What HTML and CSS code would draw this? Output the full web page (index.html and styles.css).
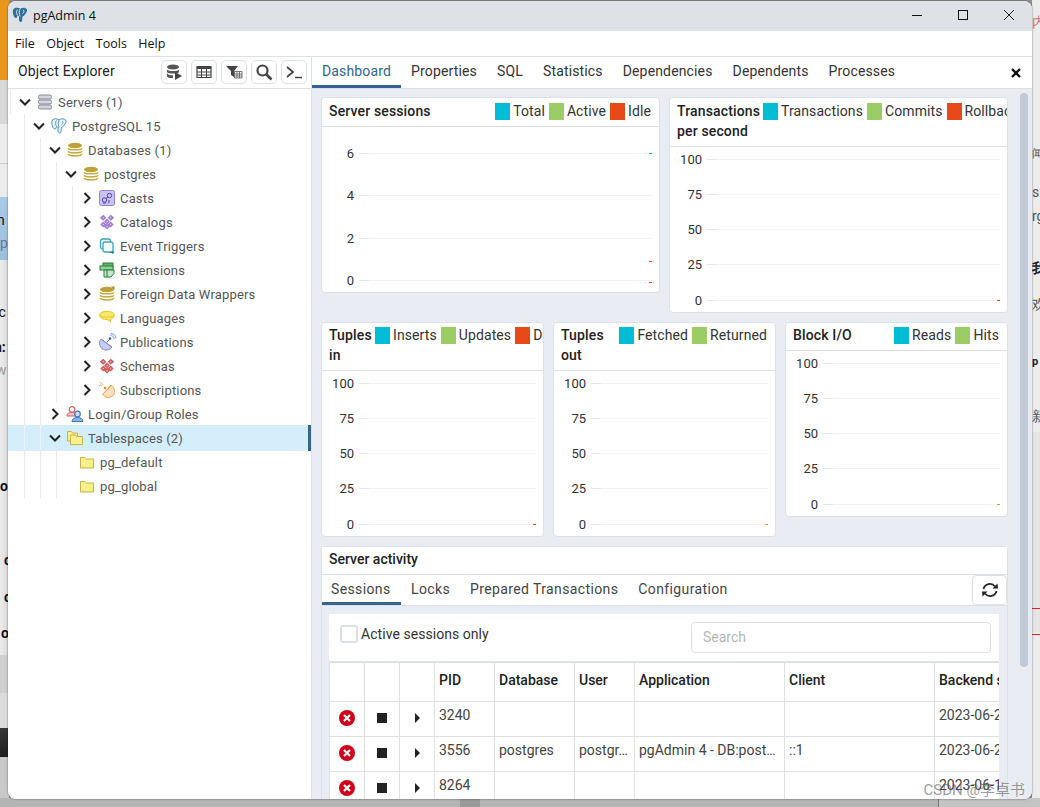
FILE: index.html
```html
<!DOCTYPE html>
<html lang="en">
<head>
<meta charset="utf-8">
<title>pgAdmin 4</title>
<link rel="stylesheet" href="styles.css">
</head>
<body>
<svg width="0" height="0" class="defs">
  <symbol id="elephant" viewBox="0 0 16 16">
    <path d="M3 1C1 1.500.5 4 1 6.500 1.500 9 2.500 11 4 11c1 0 1.200-1.500 1.500-2.500.5.500 1.300.7 1.500.5v4c0 1.800 1.800 2.500 2.800 1.500.7-1 .2-3.500.7-5 1.500-.5 2.500-2 3.500-3.500C15.500 4 15.500 1.800 13.500 1.200 11.500.5 9.500 1 8.200 1.800 7 1 4.800.5 3 1z" fill="#336f9c"/>
    <path d="M5.500 2.500C4 4 4.500 7 5.500 8.500M8.200 1.800C7 3.500 7 7 8 9.500M11 3c1.500.5 1 3-.5 3.500" fill="none" stroke="#dbeaf4" stroke-width=".9"/>
  </symbol>
  <symbol id="elephant-line" viewBox="0 0 16 16">
    <path d="M3 1C1 1.500.5 4 1 6.500 1.500 9 2.500 11 4 11c1 0 1.200-1.500 1.500-2.500.5.500 1.300.7 1.500.5v4c0 1.800 1.800 2.500 2.800 1.500.7-1 .2-3.500.7-5 1.500-.5 2.500-2 3.500-3.500C15.500 4 15.500 1.800 13.500 1.200 11.500.5 9.500 1 8.200 1.800 7 1 4.800.5 3 1z" fill="#e6f3fb" stroke="#4f94c2"/>
    <path d="M5.500 2.500C4 4 4.500 7 5.500 8.500M8.200 1.800C7 3.500 7 7 8 9.500M11 3c1.500.5 1 3-.5 3.500" fill="none" stroke="#4f94c2" stroke-width=".9"/>
  </symbol>
  <symbol id="db" viewBox="0 0 16 16">
    <ellipse cx="8" cy="3.500" rx="7" ry="2.800" fill="#bda23a"/>
    <path d="M1 6.300c1 2 13 2 14 0M1 9.300c1 2 13 2 14 0M1 12c1 2.500 13 2.500 14 0" fill="none" stroke="#c6ab42" stroke-width="1.500"/>
  </symbol>
  <symbol id="folder" viewBox="0 0 16 16">
    <path d="M1.500 3.500h4.500l1.500 1.500h7v9h-13z" fill="#f8ef8f" stroke="#c9b24a"/>
  </symbol>
  <symbol id="cluster" viewBox="0 0 16 16">
    <path fill="currentColor" d="M4.300 .8l3 3-3 3-3.500-3zM11.700 .8l3.500 3-3.500 3-3-3zM8 4.500l3 3-3 3-3-3zM4.300 7.500l3 3-3 3-3-3zM11.700 7.500l3 3-3 3-3-3zM8 9.500l3 3-3 3-3-3z"/>
    <path fill="#fff" opacity=".55" d="M4.300 2.800l1 1-1 1-1-1zM11.700 2.800l1 1-1 1-1-1zM8 6.500l1 1-1 1-1-1zM4.300 9.500l1 1-1 1-1-1zM11.700 9.500l1 1-1 1-1-1zM8 11.500l1 1-1 1-1-1z"/>
  </symbol>
  <symbol id="down" viewBox="0 0 16 16"><path d="M3 5.500l5 5 5-5" fill="none" stroke="#222" stroke-width="2"/></symbol>
  <symbol id="right" viewBox="0 0 16 16"><path d="M5.500 3l5 5-5 5" fill="none" stroke="#222" stroke-width="2"/></symbol>
  <symbol id="cancel" viewBox="0 0 16 16"><circle cx="8" cy="8" r="8" fill="#d0021b"/><path d="M5 5l6 6M11 5l-6 6" stroke="#fff" stroke-width="2.200"/></symbol>
</svg>

<div class="desktop-left">
  <div class="strip strip-orange"></div>
  <div class="strip strip-grey"></div>
  <div class="strip strip-light"></div>
  <div class="strip strip-white"></div>
  <div class="strip strip-blue"><span>n</span><span class="dim">p</span></div>
  <div class="strip strip-pale">
    <span class="t1">lc</span><span class="t2">n:</span><span class="t3">w</span><span class="t4">o</span>
    <span class="t5">c</span><span class="t6">c</span><span class="t7">o</span>
  </div>
  <div class="strip strip-mid"></div>
  <div class="strip strip-pale2"></div>
  <div class="strip strip-dark"></div>
  <div class="strip strip-end"></div>
</div>

<div class="desktop-right">
  <span class="rt r1">内</span><span class="rt r2">闻</span><span class="rt r3">s:</span><span class="rt r4">rg</span>
  <span class="rt r5">我</span><span class="rt r6">欢</span><span class="rt r7">新</span><span class="rt r8">p</span>
  <span class="r-band"></span><span class="r-red r-red-a"></span><span class="r-red r-red-b"></span>
</div>

<div class="desktop-bottom"></div>

<main class="window">
  <header class="titlebar">
    <svg class="app-logo"><use href="#elephant"/></svg>
    <span class="app-title">pgAdmin 4</span>
    <div class="win-controls">
      <svg class="wc" viewBox="0 0 46 30"><path d="M18 14.500h10" stroke="#111" fill="none"/></svg>
      <svg class="wc" viewBox="0 0 46 30"><rect x="18.500" y="9.500" width="9" height="9" stroke="#111" fill="none"/></svg>
      <svg class="wc" viewBox="0 0 46 30"><path d="M18 9l10 10M28 9L18 19" stroke="#222" fill="none"/></svg>
    </div>
  </header>

  <nav class="menubar">
    <span>File</span><span>Object</span><span>Tools</span><span>Help</span>
  </nav>

  <div class="workspace">
    <aside class="explorer">
      <div class="explorer-head">
        <span class="explorer-title">Object Explorer</span>
        <div class="toolbar">
          <button class="tool" aria-label="Query tool"><svg viewBox="0 0 18 18"><ellipse cx="8" cy="4" rx="6" ry="2.500" fill="#555"/><path d="M2 6.500c1 2 11 2 12 0v2.500c-1 2-11 2-12 0zM2 10.500c1 1.500 5 2 6 1.800V15c-2 .3-6-.2-6-1.800z" fill="#555"/><path d="M10 9l7 4-7 4z" fill="#444"/></svg></button>
          <button class="tool" aria-label="View data"><svg viewBox="0 0 18 18"><path d="M2 3.500h14v11H2z" fill="none" stroke="#444" stroke-width="1.200"/><path d="M2 3h14v3H2z" fill="#444"/><path d="M2 9h14M2 12h14M6.500 6v8M11.500 6v8" stroke="#444"/></svg></button>
          <button class="tool" aria-label="Filter"><svg viewBox="0 0 18 18"><path d="M1 3h12L9 8v6L6 12V8z" fill="#444"/><path d="M9.500 8.500h7.500v6.500H9.500zM9.500 11h7.500M9.500 13h7.500M12 8.500V15M14.500 8.500V15" fill="#fff" stroke="#555" stroke-width=".8"/></svg></button>
          <button class="tool" aria-label="Search"><svg viewBox="0 0 18 18"><circle cx="7.500" cy="7.500" r="5" fill="none" stroke="#444" stroke-width="2.200"/><path d="M11 11l5.500 5.500" stroke="#444" stroke-width="2.600"/></svg></button>
          <button class="tool" aria-label="PSQL"><svg viewBox="0 0 18 18"><path d="M2 4l6 5-6 5" fill="none" stroke="#444" stroke-width="1.800"/><path d="M10 14.500h7" stroke="#444" stroke-width="1.500"/></svg></button>
        </div>
      </div>
      <div class="tree">
        <div class="row row-root"><span class="g g-tail"></span><svg class="chev"><use href="#down"/></svg>
          <svg class="ico" viewBox="0 0 16 16"><g fill="#d3d4dc" stroke="#8a8b9c" stroke-width="1"><rect x="1.500" y="1" width="13" height="4" rx="1.500"/><rect x="1.500" y="6" width="13" height="4" rx="1.500"/><rect x="1.500" y="11" width="13" height="4" rx="1.500"/></g></svg>
          <span class="lbl">Servers (1)</span></div>

        <div class="row"><span class="g g-tail"></span><svg class="chev"><use href="#down"/></svg>
          <svg class="ico"><use href="#elephant-line"/></svg><span class="lbl">PostgreSQL 15</span></div>

        <div class="row"><span class="g"></span><span class="g g-tail"></span><svg class="chev"><use href="#down"/></svg>
          <svg class="ico"><use href="#db"/></svg><span class="lbl">Databases (1)</span></div>

        <div class="row"><span class="g"></span><span class="g"></span><span class="g g-tail"></span><svg class="chev"><use href="#down"/></svg>
          <svg class="ico"><use href="#db"/></svg><span class="lbl">postgres</span></div>

        <div class="row"><span class="g"></span><span class="g"></span><span class="g"></span><span class="g g-tail"></span><svg class="chev"><use href="#right"/></svg>
          <svg class="ico" viewBox="0 0 16 16"><rect x=".5" y=".5" width="15" height="15" rx="2" fill="#c9c2f2" stroke="#8f84d8"/><circle cx="5.500" cy="10" r="2.200" fill="none" stroke="#4f43b5"/><circle cx="10.500" cy="5.500" r="2.200" fill="none" stroke="#4f43b5"/><path d="M7 8.500l2-1.500M10 10v3M4 13h3" stroke="#4f43b5"/></svg>
          <span class="lbl">Casts</span></div>

        <div class="row"><span class="g"></span><span class="g"></span><span class="g"></span><span class="g g-tail"></span><svg class="chev"><use href="#right"/></svg>
          <svg class="ico ico-purple"><use href="#cluster"/></svg>
          <span class="lbl">Catalogs</span></div>

        <div class="row"><span class="g"></span><span class="g"></span><span class="g"></span><span class="g g-tail"></span><svg class="chev"><use href="#right"/></svg>
          <svg class="ico" viewBox="0 0 16 16"><rect x="1.500" y="1" width="10" height="10" rx="2" fill="#e4f5f7" stroke="#3fa7b5" stroke-width="1.300"/><rect x="4" y="4" width="10" height="10" rx="2" fill="#f4fbfc" stroke="#3fa7b5" stroke-width="1.300"/><path d="M11 14.500h4l-1.500-1.500M15 14.500l-1.500 1" stroke="#23798a" fill="none"/></svg>
          <span class="lbl">Event Triggers</span></div>

        <div class="row"><span class="g"></span><span class="g"></span><span class="g"></span><span class="g g-tail"></span><svg class="chev"><use href="#right"/></svg>
          <svg class="ico" viewBox="0 0 16 16"><rect x="4" y="1" width="10" height="5" fill="#5cb36a" stroke="#2a7a3c"/><rect x="1" y="4" width="13" height="4" fill="#8ed19a" stroke="#2a7a3c"/><path d="M5 8h10v3.500L12 15H5z" fill="#bfe6c5" stroke="#2a7a3c"/><path d="M8 8v7" stroke="#2a7a3c"/></svg>
          <span class="lbl">Extensions</span></div>

        <div class="row"><span class="g"></span><span class="g"></span><span class="g"></span><span class="g g-tail"></span><svg class="chev"><use href="#right"/></svg>
          <svg class="ico" viewBox="0 0 16 16"><use href="#db"/><path d="M12 .500h3.500V4z" fill="#a08a35"/></svg>
          <span class="lbl">Foreign Data Wrappers</span></div>

        <div class="row"><span class="g"></span><span class="g"></span><span class="g"></span><span class="g g-tail"></span><svg class="chev"><use href="#right"/></svg>
          <svg class="ico" viewBox="0 0 16 16"><path d="M.7 5c0-2.500 3-3.500 7.300-3.500s7.300 1 7.300 3.500-2 4-3.800 4v3L8.500 9.500C4 9.500.7 8 .7 5z" fill="#fbe96a" stroke="#e2c72a"/><path d="M1.500 6c2 1.500 10 1.500 13 0" stroke="#e2c72a" fill="none"/></svg>
          <span class="lbl">Languages</span></div>

        <div class="row"><span class="g"></span><span class="g"></span><span class="g"></span><span class="g g-tail"></span><svg class="chev"><use href="#right"/></svg>
          <svg class="ico ico-wide" viewBox="0 0 18 18"><path d="M3 6c-3 4-1 10 4 11 3 .5 6-1 7-3z" fill="#c5cdf0" stroke="#7d8bd0"/><path d="M3.500 6.500l10 7.500" stroke="#7d8bd0"/><path d="M9 9l3-3" stroke="#4a63c8"/><circle cx="12" cy="5.500" r="1.200" fill="#2f4fc0"/><path d="M12 2c2 0 4 1.500 4 4M13 .500c3 0 5 2.500 5 5" stroke="#5a74d0" fill="none" stroke-width=".8"/></svg>
          <span class="lbl">Publications</span></div>

        <div class="row"><span class="g"></span><span class="g"></span><span class="g"></span><span class="g g-tail"></span><svg class="chev"><use href="#right"/></svg>
          <svg class="ico ico-red"><use href="#cluster"/></svg>
          <span class="lbl">Schemas</span></div>

        <div class="row"><span class="g"></span><span class="g"></span><span class="g"></span><span class="g g-tail"></span><svg class="chev"><use href="#right"/></svg>
          <svg class="ico ico-wide" viewBox="0 0 18 18"><path d="M13 4c4 3 5 9 1 11.500-3 2-7 1-9.500-2z" fill="#fbe0bd" stroke="#eaa55a"/><path d="M4.500 13.500L13 5" stroke="#eaa55a"/><circle cx="7" cy="7" r="1.300" fill="#e88a2c"/><path d="M1 5c1-1 2-1 3 0M2 1.500c1 0 2.500 1 3 3" stroke="#e8a860" fill="none"/></svg>
          <span class="lbl">Subscriptions</span></div>

        <div class="row"><span class="g"></span><span class="g g-tail"></span><svg class="chev"><use href="#right"/></svg>
          <svg class="ico ico-wide" viewBox="0 0 18 18"><circle cx="6" cy="4.500" r="2.800" fill="#fff" stroke="#d2606a" stroke-width="1.200"/><path d="M1 11c0-3 2-3.500 5-3.500S11 8 11 11z" fill="#f3c5c8" stroke="#d2606a"/><circle cx="11.500" cy="9" r="2.800" fill="#cfe0f5" stroke="#3a78c0" stroke-width="1.200"/><path d="M6 16.500c0-3 2.500-4 5.500-4s5.500 1 5.500 4z" fill="#8db5e4" stroke="#3a78c0"/></svg>
          <span class="lbl">Login/Group Roles</span></div>

        <div class="row row-selected"><span class="g"></span><span class="g g-tail"></span><svg class="chev"><use href="#down"/></svg>
          <svg class="ico" viewBox="0 0 16 16"><path d="M.500 1.500h4l1 1.500h5v8H.500z" fill="#f8ef8f" stroke="#c9b24a"/><path d="M3.500 5h5l1 1.500h6v8h-12z" fill="#f8ef8f" stroke="#c9b24a"/></svg>
          <span class="lbl">Tablespaces (2)</span></div>

        <div class="row row-leaf"><span class="g"></span><span class="g"></span><span class="g g-leaf"></span><svg class="ico"><use href="#folder"/></svg><span class="lbl">pg_default</span></div>
        <div class="row row-leaf"><span class="g"></span><span class="g"></span><span class="g g-leaf"></span><svg class="ico"><use href="#folder"/></svg><span class="lbl">pg_global</span></div>
      </div>
    </aside>

    <section class="content">
      <div class="tabbar">
        <div class="tabs">
          <span class="tab tab-active">Dashboard</span>
          <span class="tab">Properties</span>
          <span class="tab">SQL</span>
          <span class="tab">Statistics</span>
          <span class="tab">Dependencies</span>
          <span class="tab">Dependents</span>
          <span class="tab">Processes</span>
        </div>
        <svg class="tab-close" viewBox="0 0 10 10" aria-label="Close"><path d="M1 1l8 8M9 1L1 9" stroke="#111" stroke-width="2.400"/></svg>
      </div>

      <div class="dash">
        <div class="dash-main">
          <div class="chart-row">
            <article class="card">
              <div class="card-head">
                <b class="card-title card-title-wide">Server sessions</b>
                <div class="legend"><i class="sw cyan"></i><span>Total</span><i class="sw green"></i><span>Active</span><i class="sw red"></i><span>Idle</span></div>
              </div>
              <div class="plot plot-tall">
                <div class="tick"><span>6</span><em><u class="dot cyan"></u></em></div>
                <div class="tick"><span>4</span><em></em></div>
                <div class="tick"><span>2</span><em><u class="dot red low"></u></em></div>
                <div class="tick"><span>0</span><em><u class="dot red under"></u></em></div>
              </div>
            </article>
            <article class="card">
              <div class="card-head card-head-two">
                <b class="card-title">Transactions per second</b>
                <div class="legend legend-start"><i class="sw cyan"></i><span>Transactions</span><i class="sw green"></i><span>Commits</span><i class="sw red"></i><span>Rollbacks</span></div>
              </div>
              <div class="plot">
                <div class="tick"><span>100</span><em></em></div>
                <div class="tick"><span>75</span><em></em></div>
                <div class="tick"><span>50</span><em></em></div>
                <div class="tick"><span>25</span><em></em></div>
                <div class="tick"><span>0</span><em><u class="dot red"></u></em></div>
              </div>
            </article>
          </div>

          <div class="chart-row chart-row-b">
            <article class="card">
              <div class="card-head card-head-tuples">
                <b class="card-title card-title-narrow">Tuples in</b>
                <div class="legend"><i class="sw cyan"></i><span>Inserts</span><i class="sw green"></i><span>Updates</span><i class="sw red"></i><span>Deletes</span></div>
              </div>
              <div class="plot">
                <div class="tick"><span>100</span><em></em></div>
                <div class="tick"><span>75</span><em></em></div>
                <div class="tick"><span>50</span><em></em></div>
                <div class="tick"><span>25</span><em></em></div>
                <div class="tick"><span>0</span><em><u class="dot red"></u></em></div>
              </div>
            </article>
            <article class="card">
              <div class="card-head card-head-tuples">
                <b class="card-title card-title-narrow">Tuples out</b>
                <div class="legend"><i class="sw cyan"></i><span>Fetched</span><i class="sw green"></i><span>Returned</span></div>
              </div>
              <div class="plot">
                <div class="tick"><span>100</span><em></em></div>
                <div class="tick"><span>75</span><em></em></div>
                <div class="tick"><span>50</span><em></em></div>
                <div class="tick"><span>25</span><em></em></div>
                <div class="tick"><span>0</span><em><u class="dot amber"></u></em></div>
              </div>
            </article>
            <article class="card">
              <div class="card-head card-head-block">
                <b class="card-title card-title-wide">Block I/O</b>
                <div class="legend"><i class="sw cyan"></i><span>Reads</span><i class="sw green"></i><span>Hits</span></div>
              </div>
              <div class="plot">
                <div class="tick"><span>100</span><em></em></div>
                <div class="tick"><span>75</span><em></em></div>
                <div class="tick"><span>50</span><em></em></div>
                <div class="tick"><span>25</span><em></em></div>
                <div class="tick"><span>0</span><em><u class="dot amber"></u></em></div>
              </div>
            </article>
          </div>

          <article class="activity">
            <div class="activity-title">Server activity</div>
            <div class="subtabs">
              <span class="subtab subtab-active">Sessions</span>
              <span class="subtab">Locks</span>
              <span class="subtab">Prepared Transactions</span>
              <span class="subtab">Configuration</span>
              <button class="refresh" aria-label="Refresh"><svg viewBox="0 0 18 18"><path d="M2.500 8a6.500 6.500 0 0 1 11.500-2.500M15.500 10A6.500 6.500 0 0 1 4 12.500" fill="none" stroke="#222" stroke-width="1.700"/><path d="M11.500 7.500H17l-.5-5zM6.500 10.500H1l.5 5z" fill="#222"/></svg></button>
            </div>
            <div class="activity-body">
              <div class="filters">
                <label class="check"><span class="box"></span>Active sessions only</label>
                <span class="search">Search</span>
              </div>
              <div class="grid">
                <div class="gh"></div><div class="gh"></div><div class="gh"></div>
                <div class="gh">PID</div><div class="gh">Database</div><div class="gh">User</div><div class="gh">Application</div><div class="gh">Client</div><div class="gh">Backend s</div>

                <div class="gc gi"><svg class="x"><use href="#cancel"/></svg></div><div class="gc gi"><span class="stop"></span></div><div class="gc gi"><span class="play"></span></div>
                <div class="gc">3240</div><div class="gc"></div><div class="gc"></div><div class="gc"></div><div class="gc"></div><div class="gc">2023-06-2</div>

                <div class="gc gi"><svg class="x"><use href="#cancel"/></svg></div><div class="gc gi"><span class="stop"></span></div><div class="gc gi"><span class="play"></span></div>
                <div class="gc">3556</div><div class="gc">postgres</div><div class="gc">postgr…</div><div class="gc">pgAdmin 4 - DB:post…</div><div class="gc">::1</div><div class="gc">2023-06-2</div>

                <div class="gc gi"><svg class="x"><use href="#cancel"/></svg></div><div class="gc gi"><span class="stop"></span></div><div class="gc gi"><span class="play"></span></div>
                <div class="gc">8264</div><div class="gc"></div><div class="gc"></div><div class="gc"></div><div class="gc"></div><div class="gc">2023-06-1</div>
              </div>
            </div>
          </article>
        </div>
        <div class="scrollbar"><div class="thumb"></div></div>
      </div>
    </section>
  </div>
</main>

<span class="watermark">CSDN @李卓书</span>
</body>
</html>
```
FILE: styles.css
```css
* { box-sizing: border-box; }
html, body { margin: 0; height: 100%; }
body {
  position: relative;
  width: 1040px;
  height: 807px;
  overflow: hidden;
  background: #8f8f8f;
  font-family: Roboto, "Noto Sans", sans-serif;
  font-size: 14px;
  color: #222;
}
.defs { position: absolute; }

/* desktop behind the window */
.desktop-left {
  position: absolute;
  left: 0; top: 0;
  width: 9px; height: 807px;
  display: flex;
  flex-direction: column;
  overflow: hidden;
  font-size: 14px;
  color: #111;
}
.strip { flex: none; position: relative; }
.strip-orange { height: 80px; background: #e8961c; }
.strip-grey { height: 44px; background: #d8d8d8; }
.strip-light { height: 40px; background: #ededed; border-bottom: 1px solid #ccc; }
.strip-white { height: 33px; background: #ececec; }
.strip-blue { height: 63px; background: linear-gradient(#a8cbe6, #9cc0de); }
.strip-blue span { position: absolute; left: -3px; top: 15px; }
.strip-blue .dim { left: 0; top: 38px; color: #5e7d96; }
.strip-pale { height: 395px; background: linear-gradient(to right, #ececec, #d8d8d8); }
.strip-pale span { position: absolute; }
.t1 { left: -5px; top: 44px; }
.t2 { left: -6px; top: 79px; font-weight: 700; }
.t3 { left: -4px; top: 102px; color: #999; }
.t4 { left: 0; top: 218px; font-weight: 700; }
.t5 { left: 4px; top: 292px; font-weight: 700; }
.t6 { left: 4px; top: 329px; font-weight: 700; }
.t7 { left: 1px; top: 365px; font-weight: 700; }
.strip-mid { height: 38px; background: #cfcfcf; }
.strip-pale2 { height: 35px; background: #dcdcdc; }
.strip-dark { height: 29px; background: linear-gradient(#383838, #1e1e1e); }
.strip-end { height: 90px; background: #c8c8c8; }

.desktop-right {
  position: absolute;
  right: 0; top: 0;
  width: 8px; height: 807px;
  background: #ececec;
  overflow: hidden;
}
.rt { position: absolute; left: 0; font-size: 14px; color: #555; }
.r1 { top: 14px; color: #c77; }
.r2 { top: 146px; font-size: 11px; }
.r3 { top: 184px; }
.r4 { top: 208px; }
.r5 { top: 260px; font-weight: 700; color: #222; }
.r6 { top: 296px; }
.r7 { top: 408px; }
.r8 { top: 355px; color: #222; font-weight: 700; font-size: 11px; }
.r-band { position: absolute; left: 0; top: 432px; width: 8px; height: 200px; background: #e4e4e4; }
.r-red { position: absolute; left: 0; width: 8px; height: 1px; background: #e02020; }
.r-red-a { top: 608px; }
.r-red-b { top: 634px; }
.desktop-bottom {
  position: absolute;
  left: 0; bottom: 0;
  width: 1040px; height: 9px;
  background: linear-gradient(to right, #b4b4b4 460px, #999 460px, #999 480px, #b4b4b4 480px, #b4b4b4 938px, #777 938px, #777 939px, #c4c4c4 939px);
}

/* window */
.window {
  position: absolute;
  left: 8px; top: 1px;
  width: 1024px; height: 798px;
  border-radius: 8px;
  overflow: hidden;
  display: flex;
  flex-direction: column;
  background: #fff;
  box-shadow: 0 0 2px rgba(0, 0, 0, .6);
}
.titlebar {
  flex: none;
  height: 30px;
  background: #dee1e6;
  display: flex;
  align-items: center;
  padding-left: 4px;
}
.app-logo { width: 16px; height: 16px; margin-right: 5px; margin-top: -2px; }
.app-title { font-family: "Open Sans", sans-serif; font-size: 12.5px; color: #111; margin-top: -2px; }
.win-controls { margin-left: auto; display: flex; }
.wc { width: 46px; height: 30px; }
.menubar {
  flex: none;
  height: 26px;
  background: #fff;
  display: flex;
  align-items: center;
  gap: 11.5px;
  padding-left: 7px;
  font-family: "Open Sans", sans-serif;
  font-size: 12.5px;
  color: #111;
  border-bottom: 1px solid #dde0e6;
}
.workspace { flex: 1; min-height: 0; display: flex; }

/* explorer */
.explorer {
  flex: none;
  width: 304px;
  background: #fff;
  border-right: 1px solid #dde0e6;
  display: flex;
  flex-direction: column;
}
.explorer-head {
  flex: none;
  height: 32px;
  display: flex;
  align-items: center;
  padding-left: 10px;
  border-bottom: 1px solid #dde0e6;
}
.explorer-title { color: #222; letter-spacing: .15px; margin-top: -3px; }
.toolbar { margin-left: auto; display: flex; gap: 4px; margin-right: 4px; margin-top: -2px; }
.tool {
  width: 26px; height: 24px;
  padding: 0;
  background: #fff;
  border: 1px solid #dde0e6;
  border-radius: 5px;
  display: flex;
  align-items: center;
  justify-content: center;
}
.tool svg { width: 18px; height: 18px; }
.refresh svg { width: 18px; height: 18px; }

.tree { flex: 1; padding: 1px 0 0 16px; color: #555; font-size: 13px; letter-spacing: .17px; }
.row {
  position: relative;
  height: 24px;
  display: flex;
  align-items: center;
}
.g {
  flex: none;
  width: 16px;
  align-self: stretch;
  border-left: 1px solid #e8eaee;
}
.g-tail { width: 7px; }
.g-leaf { width: 23px; }
.row-root { margin-left: -14px; }
.chev { flex: none; width: 16px; height: 16px; margin-right: 4px; }
.ico { flex: none; width: 16px; height: 16px; margin-right: 5px; overflow: visible; }
.ico-wide { width: 18px; height: 18px; margin-left: -1px; margin-right: 4px; }
.ico-purple { color: #a07ad8; }
.ico-red { color: #cf5a5a; }
.lbl { white-space: nowrap; }
.row-selected {
  height: 26px;
  margin: -1px 0 -1px -16px;
  padding-left: 16px;
  background: #d4edfb;
  border-right: 3px solid #326690;
}
.row-selected .g { border-left-color: #f0f4f8; }

/* content */
.content { flex: 1; min-width: 0; display: flex; flex-direction: column; background: #e9ecf2; }
.tabbar {
  flex: none;
  height: 32px;
  background: #fff;
  border-bottom: 1px solid #dde0e6;
  display: flex;
  align-items: flex-start;
  justify-content: space-between;
}
.tabs { display: flex; }
.tab {
  padding: 0 10px;
  height: 31px;
  line-height: 28px;
  color: #333;
  letter-spacing: .15px;
  border-bottom: 3px solid transparent;
}
.tab-active { color: #326690; border-bottom-color: #326690; }
.tab-close { flex: none; width: 10px; height: 10px; margin: 11px 11px 0 0; }

.dash { flex: 1; min-height: 0; display: flex; overflow: hidden; }
.dash-main {
  flex: none;
  width: 687px;
  margin-left: 9px;
  padding-top: 8px;
  display: flex;
  flex-direction: column;
  gap: 9px;
  min-height: 0;
}
.chart-row { display: flex; gap: 9px; align-items: flex-start; flex: none; }
.card {
  flex: 1 1 0;
  min-width: 0;
  background: #fff;
  border: 1px solid #dde0e6;
  border-radius: 4px;
  overflow: hidden;
}
.card-head {
  display: flex;
  align-items: flex-start;
  padding: 3px 8px 0 7px;
  height: 29px;
  line-height: 20px;
  border-bottom: 1px solid #dde0e6;
  overflow: hidden;
}
.card-head-two { height: 49px; }
.card-head-tuples { height: 48px; padding-top: 2px; }
.card-head-block { height: 28px; padding-top: 2px; }
.card-title { flex: none; width: 86px; font-weight: 500; color: #222; line-height: 20px; letter-spacing: .15px; }
.card-title-narrow { width: 46px; }
.card-title-wide { width: auto; }
.legend { display: flex; margin-left: auto; color: #333; flex: none; align-items: flex-start; letter-spacing: .1px; }
.legend-start { margin-left: 0; }
.sw { flex: none; display: block; width: 15px; height: 17px; margin: 2px 3px 0 4px; }
.sw:first-child { margin-left: 0; }
.cyan { background: #00bcd4; }
.green { background: #9ccc65; }
.red { background: #e64a19; }
.amber { background: #d0a020; }

.plot { padding: 4px 7px 4px 0; display: flex; flex-direction: column; }
.plot-tall { padding: 18px 7px 3.5px 0; }
.tick {
  display: flex;
  align-items: center;
  height: 16px;
  font-size: 13px;
  color: #333;
}
.tick + .tick { margin-top: 19.25px; }
.plot-tall .tick + .tick { margin-top: 26.5px; }
.tick span { flex: none; width: 32px; text-align: right; margin-right: 5px; }
.tick em {
  position: relative;
  flex: 1;
  height: 1px;
  background: linear-gradient(to right, #e6e6e6 10px, #f2f3f5 10px);
}
.dot { position: absolute; right: 0; top: 0; width: 3px; height: 1px; }
.dot.low { top: 23px; }
.dot.under { top: 2px; }

/* activity */
.activity {
  flex: none;
  background: #e9ecf2;
  border: 1px solid #dde0e6;
  border-radius: 4px 4px 0 0;
}
.activity-title {
  height: 28px;
  background: #fff;
  padding: 2px 7px 0;
  font-weight: 500;
  line-height: 20px;
  color: #222;
  border-bottom: 1px solid #dde0e6;
}
.subtabs {
  position: relative;
  height: 31px;
  display: flex;
  background: #fff;
  border-bottom: 1px solid #dde0e6;
}
.subtab {
  padding: 0 10px;
  height: 30px;
  line-height: 28px;
  color: #444;
  letter-spacing: .38px;
  border-bottom: 3px solid transparent;
}
.subtab-active { border-bottom-color: #326690; width: 79px; padding: 0 0 0 9px; }
.refresh {
  position: absolute;
  right: 0; top: 0;
  width: 35px; height: 30px;
  padding: 0;
  background: #fff;
  border: 1px solid #dde0e6;
  border-radius: 4px;
  display: flex;
  align-items: center;
  justify-content: center;
}
.activity-body { margin: 8px 8px 0 7px; background: #fff; height: 200px; overflow: hidden; }
.filters {
  height: 49px;
  border-bottom: 2px solid #dde0e6;
  display: flex;
  align-items: flex-start;
  padding: 9px 8px 0 11px;
  justify-content: space-between;
}
.check { display: flex; align-items: center; gap: 3px; color: #333; height: 21px; letter-spacing: .05px; }
.box { width: 18px; height: 18px; border: 2px solid #dde0e6; border-radius: 3px; }
.search {
  width: 300px; height: 31px;
  margin-top: -1px;
  border: 1px solid #dde0e6;
  border-radius: 4px;
  padding-left: 11px;
  line-height: 29px;
  color: #b5b5b5;
}
.grid {
  display: grid;
  grid-template-columns: 35px 35px 35px 60px 80px 60px 150px 150px 70px;
  grid-auto-rows: 35px;
  grid-template-rows: 39px;
  width: 700px;
  border-left: 1px solid #dde0e6;
}
.gh, .gc {
  border-right: 1px solid #dde0e6;
  border-bottom: 1px solid #dde0e6;
  padding: 0 4px;
  white-space: nowrap;
  overflow: hidden;
}
.gh { font-weight: 500; color: #222; padding-top: 7px; line-height: 20px; }
.gc { color: #444; padding-top: 3px; line-height: 20px; }
.gi { display: flex; align-items: center; justify-content: center; padding: 0 0 3px; }
.x { width: 16px; height: 16px; }
.stop { width: 10px; height: 10px; background: #222; }
.play { width: 0; height: 0; border-left: 5px solid #222; border-top: 5px solid transparent; border-bottom: 5px solid transparent; }

.scrollbar { flex: none; width: 8px; margin: 4px 0 0 12px; }
.thumb { width: 8px; height: 574px; background: #c2cad6; border-radius: 4px; }

.watermark {
  position: absolute;
  right: 15px; bottom: 8px;
  font-size: 15px;
  color: rgba(90, 90, 90, .6);
  font-family: Roboto, "Noto Sans CJK SC", sans-serif;
}
```
